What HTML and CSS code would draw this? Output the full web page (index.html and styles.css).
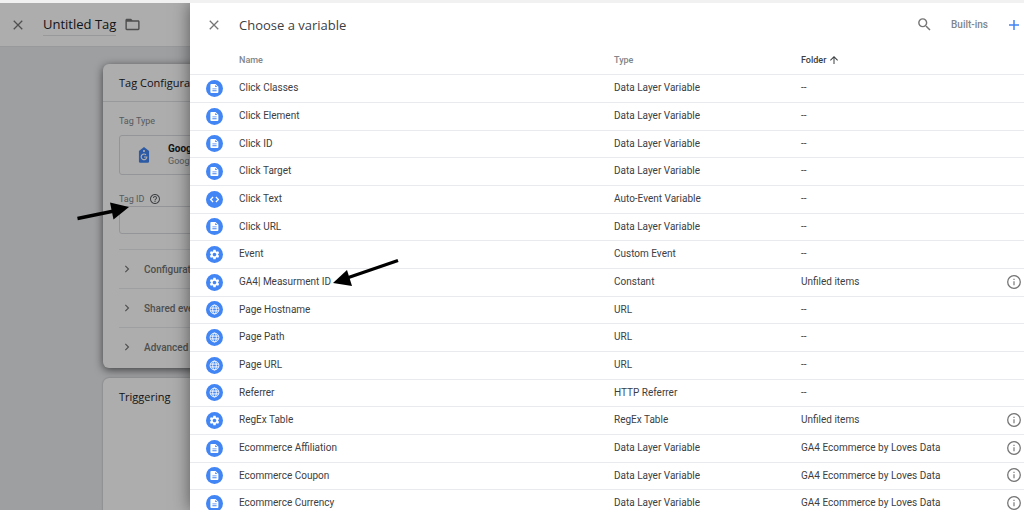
FILE: index.html
```html
<!DOCTYPE html>
<html lang="en">
<head>
    <meta charset="UTF-8">
    <meta name="viewport" content="width=device-width, initial-scale=1.0">
    <title>Choose a variable</title>
    <link rel="stylesheet" href="styles.css">
</head>
<body>
    <!-- Icon sprite -->
    <svg class="sprite" aria-hidden="true">
        <symbol id="icon-close" viewBox="0 0 24 24"><path d="M3.500 3.500L20.500 20.500M20.500 3.500L3.500 20.500" fill="none" stroke="currentColor" stroke-width="2.600"/></symbol>
        <symbol id="icon-folder" viewBox="0 0 24 24"><path d="M20 6h-8l-2-2H4c-1.1 0-2 .9-2 2v12c0 1.1.9 2 2 2h16c1.1 0 2-.9 2-2V8c0-1.1-.9-2-2-2zm0 12H4V8h16v10z"/></symbol>
        <symbol id="icon-help" viewBox="0 0 24 24"><path d="M11 18h2v-2h-2v2zm1-16C6.48 2 2 6.48 2 12s4.48 10 10 10 10-4.480 10-10S17.520 2 12 2zm0 18c-4.410 0-8-3.590-8-8s3.590-8 8-8 8 3.590 8 8-3.590 8-8 8zm0-14c-2.210 0-4 1.790-4 4h2c0-1.100.9-2 2-2s2 .9 2 2c0 2-3 1.750-3 5h2c0-2.250 3-2.500 3-5 0-2.210-1.790-4-4-4z"/></symbol>
        <symbol id="icon-chevron" viewBox="0 0 24 24"><path d="M8 4.500L15.500 12L8 19.500" fill="none" stroke="currentColor" stroke-width="2.800"/></symbol>
        <symbol id="icon-search" viewBox="0 0 24 24"><path d="M15.500 14h-.79l-.28-.27A6.471 6.471 0 0 0 16 9.500 6.500 6.500 0 1 0 9.500 16c1.610 0 3.090-.59 4.230-1.570l.27.28v.79l5 4.990L20.490 19l-4.990-5zm-6 0C7.010 14 5 11.990 5 9.500S7.010 5 9.500 5 14 7.010 14 9.500 11.990 14 9.500 14z"/></symbol>
        <symbol id="icon-plus" viewBox="0 0 24 24"><path d="M12 2V22M2 12H22" fill="none" stroke="currentColor" stroke-width="3"/></symbol>
        <symbol id="icon-up" viewBox="0 0 24 24"><path d="M4 12l1.410 1.410L11 7.830V20h2V7.830l5.580 5.590L20 12l-8-8-8 8z"/></symbol>
        <symbol id="icon-info" viewBox="0 0 24 24"><circle cx="12" cy="12" r="10.800" fill="none" stroke="currentColor" stroke-width="2.200"/><path d="M11 10.500h2v7h-2zM11 6.500h2v2.200h-2z"/></symbol>
        <symbol id="icon-doc" viewBox="0 0 24 24"><circle cx="12" cy="12" r="12" fill="#4285f4"/><path fill="#fff" fill-rule="evenodd" d="M7.500 5.500h6L17.500 9.500V17a1.300 1.300 0 0 1-1.300 1.300H7.500A1.300 1.300 0 0 1 6.200 17V6.800A1.300 1.300 0 0 1 7.500 5.500zm5.500 1.500V10h3zM9 12v1.200h6V12zm0 2.500v1.300h6v-1.300z"/></symbol>
        <symbol id="icon-code" viewBox="0 0 24 24"><circle cx="12" cy="12" r="12" fill="#4285f4"/><path d="M10 8.500L6.500 12L10 15.500M14 8.500L17.500 12L14 15.500" fill="none" stroke="#fff" stroke-width="1.700"/></symbol>
        <symbol id="icon-gear" viewBox="0 0 24 24"><circle cx="12" cy="12" r="12" fill="#4285f4"/><g transform="translate(3.500 3.500) scale(.708)"><path fill="#fff" d="M19.140 12.940c.04-.3.06-.61.06-.94 0-.32-.02-.64-.07-.94l2.030-1.580c.18-.14.23-.41.12-.61l-1.920-3.320c-.12-.22-.37-.29-.59-.22l-2.390.96c-.5-.38-1.030-.7-1.620-.94l-.36-2.540c-.04-.24-.24-.41-.48-.41h-3.840c-.24 0-.43.17-.47.41l-.36 2.540c-.59.24-1.130.57-1.620.94l-2.390-.96c-.22-.08-.47 0-.59.22L2.740 8.870c-.12.21-.08.47.12.61l2.030 1.580c-.05.3-.09.63-.09.94s.02.64.07.94l-2.030 1.580c-.18.14-.23.41-.12.61l1.920 3.320c.12.22.37.29.59.22l2.390-.96c.5.38 1.030.7 1.620.94l.36 2.540c.05.24.24.41.48.41h3.840c.24 0 .44-.17.47-.41l.36-2.540c.59-.24 1.130-.56 1.620-.94l2.390.96c.22.08.47 0 .59-.22l1.920-3.320c.12-.22.07-.47-.12-.61l-2.010-1.580zM12 15.600c-1.980 0-3.600-1.620-3.600-3.600s1.620-3.600 3.600-3.600 3.600 1.620 3.600 3.600-1.620 3.600-3.600 3.600z"/></g></symbol>
        <symbol id="icon-globe" viewBox="0 0 24 24"><circle cx="12" cy="12" r="12" fill="#4285f4"/><g fill="none" stroke="#fff" stroke-width="1.300"><circle cx="12" cy="12" r="6.200"/><ellipse cx="12" cy="12" rx="2.600" ry="6.200"/><path d="M6.500 10h11M6.500 14h11"/></g></symbol>
        <symbol id="icon-tag" viewBox="0 0 22 30"><path fill="#4285f4" d="M11 0l9.500 7.500V27a2.500 2.500 0 0 1-2.500 2.500H4A2.500 2.500 0 0 1 1.500 27V7.500z"/><circle cx="11" cy="7.500" r="2" fill="#fff"/><path d="M14.800 14.800A5.300 5.300 0 1 0 16.300 18.700H11" fill="none" stroke="#fff" stroke-width="2.200"/></symbol>
    </svg>

    <div class="top-strip"></div>
    <div class="workspace">
        <div class="editor">
            <header class="editor-header">
                <button class="icon-button" aria-label="Close tag"><svg class="icon-md"><use href="#icon-close"/></svg></button>
                <h1 class="editor-title">Untitled Tag</h1>
                <button class="icon-button" aria-label="Folder"><svg class="icon-lg"><use href="#icon-folder"/></svg></button>
            </header>
            <main class="editor-body">
                <section class="card card-raised">
                    <h2 class="card-title card-title-ruled">Tag Configuration</h2>
                    <div class="card-content">
                        <p class="field-label">Tag Type</p>
                        <button class="tag-type">
                            <svg class="tag-icon"><use href="#icon-tag"/></svg>
                            <span><span class="tag-name">Google Tag</span><span class="tag-vendor">Google</span></span>
                        </button>
                        <div class="field-row">
                            <label class="field-label" for="tag-id">Tag ID</label>
                            <svg class="icon-md"><use href="#icon-help"/></svg>
                        </div>
                        <input class="tag-id" id="tag-id" type="text">
                        <button class="section-toggle"><svg class="icon-sm"><use href="#icon-chevron"/></svg>Configuration settings</button>
                        <button class="section-toggle"><svg class="icon-sm"><use href="#icon-chevron"/></svg>Shared event settings</button>
                        <button class="section-toggle"><svg class="icon-sm"><use href="#icon-chevron"/></svg>Advanced Settings</button>
                    </div>
                </section>
                <section class="card card-triggering">
                    <h2 class="card-title">Triggering</h2>
                </section>
            </main>
        </div>
        <div class="scrim"></div>

        <aside class="sheet">
            <header class="sheet-header">
                <button class="icon-button" aria-label="Close"><svg class="icon-md"><use href="#icon-close"/></svg></button>
                <h2 class="sheet-title">Choose a variable</h2>
                <button class="icon-button" aria-label="Search"><svg class="icon-lg"><use href="#icon-search"/></svg></button>
                <button class="built-ins">Built-ins</button>
                <button class="icon-button add-button" aria-label="New variable"><svg class="icon-md"><use href="#icon-plus"/></svg></button>
            </header>
            <table class="variables">
                <colgroup>
                    <col class="col-icon">
                    <col>
                    <col class="col-type">
                    <col class="col-folder">
                    <col class="col-info">
                </colgroup>
                <thead>
                    <tr><th></th><th>Name</th><th>Type</th><th class="sorted"><span class="sort-label">Folder<svg class="icon-md"><use href="#icon-up"/></svg></span></th><th></th></tr>
                </thead>
                <tbody>
                    <tr><td><svg class="type-icon"><use href="#icon-doc"/></svg></td><td>Click Classes</td><td>Data Layer Variable</td><td>--</td><td></td></tr>
                    <tr><td><svg class="type-icon"><use href="#icon-doc"/></svg></td><td>Click Element</td><td>Data Layer Variable</td><td>--</td><td></td></tr>
                    <tr><td><svg class="type-icon"><use href="#icon-doc"/></svg></td><td>Click ID</td><td>Data Layer Variable</td><td>--</td><td></td></tr>
                    <tr><td><svg class="type-icon"><use href="#icon-doc"/></svg></td><td>Click Target</td><td>Data Layer Variable</td><td>--</td><td></td></tr>
                    <tr><td><svg class="type-icon"><use href="#icon-code"/></svg></td><td>Click Text</td><td>Auto-Event Variable</td><td>--</td><td></td></tr>
                    <tr><td><svg class="type-icon"><use href="#icon-doc"/></svg></td><td>Click URL</td><td>Data Layer Variable</td><td>--</td><td></td></tr>
                    <tr><td><svg class="type-icon"><use href="#icon-gear"/></svg></td><td>Event</td><td>Custom Event</td><td>--</td><td></td></tr>
                    <tr><td><svg class="type-icon"><use href="#icon-gear"/></svg></td><td>GA4| Measurment ID</td><td>Constant</td><td>Unfiled items</td><td><button class="icon-button info-button" aria-label="Details"><svg class="info-icon"><use href="#icon-info"/></svg></button></td></tr>
                    <tr><td><svg class="type-icon"><use href="#icon-globe"/></svg></td><td>Page Hostname</td><td>URL</td><td>--</td><td></td></tr>
                    <tr><td><svg class="type-icon"><use href="#icon-globe"/></svg></td><td>Page Path</td><td>URL</td><td>--</td><td></td></tr>
                    <tr><td><svg class="type-icon"><use href="#icon-globe"/></svg></td><td>Page URL</td><td>URL</td><td>--</td><td></td></tr>
                    <tr><td><svg class="type-icon"><use href="#icon-globe"/></svg></td><td>Referrer</td><td>HTTP Referrer</td><td>--</td><td></td></tr>
                    <tr><td><svg class="type-icon"><use href="#icon-gear"/></svg></td><td>RegEx Table</td><td>RegEx Table</td><td>Unfiled items</td><td><button class="icon-button info-button" aria-label="Details"><svg class="info-icon"><use href="#icon-info"/></svg></button></td></tr>
                    <tr><td><svg class="type-icon"><use href="#icon-doc"/></svg></td><td>Ecommerce Affiliation</td><td>Data Layer Variable</td><td>GA4 Ecommerce by Loves Data</td><td><button class="icon-button info-button" aria-label="Details"><svg class="info-icon"><use href="#icon-info"/></svg></button></td></tr>
                    <tr><td><svg class="type-icon"><use href="#icon-doc"/></svg></td><td>Ecommerce Coupon</td><td>Data Layer Variable</td><td>GA4 Ecommerce by Loves Data</td><td><button class="icon-button info-button" aria-label="Details"><svg class="info-icon"><use href="#icon-info"/></svg></button></td></tr>
                    <tr><td><svg class="type-icon"><use href="#icon-doc"/></svg></td><td>Ecommerce Currency</td><td>Data Layer Variable</td><td>GA4 Ecommerce by Loves Data</td><td><button class="icon-button info-button" aria-label="Details"><svg class="info-icon"><use href="#icon-info"/></svg></button></td></tr>
                </tbody>
            </table>
        </aside>
    </div>

    <!-- Annotation arrows -->
    <svg class="arrow arrow-tag-id" viewBox="0 0 54 20"><path d="M1.500 16.500L38 9" stroke="#000" stroke-width="3.400"/><path d="M34 .5L53 5L37.500 17.500z"/></svg>
    <svg class="arrow arrow-measurement" viewBox="0 0 68 30"><path d="M65 2.500L14 20" stroke="#000" stroke-width="3.400"/><path d="M14 12L0 25L19 28z"/></svg>
</body>
</html>
```

FILE: styles.css
```css
* {
    margin: 0;
    padding: 0;
    box-sizing: border-box;
}

body {
    font-family: Roboto, "Liberation Sans", sans-serif;
    font-size: 10px;
    color: #3c4043;
    height: 100vh;
    display: flex;
    flex-direction: column;
    overflow: hidden;
    position: relative;
}

button {
    font: inherit;
    color: inherit;
    background: none;
    border: none;
    cursor: pointer;
}

svg {
    display: block;
    fill: currentColor;
}

.sprite {
    position: absolute;
    width: 0;
    height: 0;
}

.top-strip {
    height: 3px;
    flex: none;
    background: #f1f1f1;
}

.workspace {
    flex: 1;
    position: relative;
    overflow: hidden;
}

.icon-button {
    display: flex;
    color: #757575;
}

.icon-sm {
    width: 10px;
    height: 10px;
}

.icon-md {
    width: 12px;
    height: 12px;
}

.icon-lg {
    width: 17px;
    height: 17px;
}

/* Tag editor */
.editor {
    height: 100%;
    background: #e8eaed;
}

.editor-header {
    display: flex;
    align-items: center;
    height: 44px;
    padding-left: 12px;
    background: #fff;
    border-bottom: 1px solid #e0e2e4;
}

.editor-title {
    margin: 0 8px 0 19px;
    font-family: "Open Sans", sans-serif;
    font-size: 13px;
    font-weight: 400;
    line-height: 22px;
    color: #202124;
    border-bottom: 1px solid #e0e2e4;
}

.editor-body {
    display: flex;
    flex-direction: column;
    gap: 10px;
    padding: 17px 0 0 103px;
}

.card {
    background: #fff;
    border-radius: 6px;
    box-shadow: 0 0 2px rgba(0, 0, 0, 0.3);
}

.card-raised {
    box-shadow: 0 2px 8px rgba(0, 0, 0, 0.6);
}

.card-triggering {
    height: 300px;
}

.card-title {
    padding: 0 16px;
    font-family: "Open Sans", sans-serif;
    font-size: 11px;
    font-weight: 400;
    line-height: 37px;
    color: #202124;
}

.card-title-ruled {
    border-bottom: 1px solid #e0e2e4;
}

.card-content {
    padding: 12px 16px 2px;
}

.field-label {
    font-size: 9px;
    line-height: 14px;
    color: #80868b;
}

.tag-type {
    display: flex;
    align-items: center;
    gap: 18px;
    width: 100%;
    height: 40px;
    margin: 7px 0 17px;
    padding-left: 18px;
    border: 1px solid #dadce0;
    border-radius: 3px;
    text-align: left;
}

.tag-icon {
    width: 12px;
    height: 16px;
}

.tag-name,
.tag-vendor {
    display: block;
    line-height: 12px;
}

.tag-name {
    font-weight: 700;
    color: #202124;
}

.tag-vendor {
    font-size: 9px;
    color: #80868b;
}

.field-row {
    display: flex;
    align-items: center;
    gap: 5px;
    color: #5f6368;
}

.tag-id {
    display: block;
    width: 100%;
    height: 28px;
    margin-bottom: 15px;
    border: 1px solid #dadce0;
    border-radius: 3px;
    background: #fff;
}

.section-toggle {
    display: flex;
    align-items: center;
    gap: 12px;
    width: 100%;
    height: 39px;
    padding-left: 3px;
    border-top: 1px solid #e8eaed;
    font-weight: 500;
    color: #757575;
}

.scrim {
    position: absolute;
    inset: 0;
    background: rgba(0, 0, 0, 0.32);
}

/* Variable picker sheet */
.sheet {
    position: absolute;
    inset: 0 0 0 190px;
    background: #fff;
    box-shadow: 0 0 16px rgba(0, 0, 0, 0.5);
}

.sheet-header {
    display: flex;
    align-items: center;
    height: 43px;
    padding: 0 4px 0 18px;
}

.sheet-title {
    flex: 1;
    margin-left: 19px;
    font-family: "Open Sans", sans-serif;
    font-size: 13px;
    font-weight: 400;
    color: #3c4043;
}

.built-ins {
    margin: 0 20px 0 18px;
    font-weight: 500;
    color: #80868b;
}

.add-button {
    color: #4285f4;
}

.variables {
    width: 100%;
    table-layout: fixed;
    border-collapse: collapse;
}

.col-icon {
    width: 49px;
}

.col-type {
    width: 187px;
}

.col-folder {
    width: 200px;
}

.col-info {
    width: 23px;
}

.variables tr {
    height: 28px;
    border-bottom: 1px solid #e8eaed;
}

.variables tbody tr:nth-child(3n) {
    height: 27px;
}

.variables th {
    font-size: 9px;
    font-weight: 500;
    text-align: left;
    color: #80868b;
}

.variables .sorted {
    color: #3c4043;
}

.sort-label {
    display: flex;
    align-items: center;
    gap: 2px;
}

.variables td {
    padding-bottom: 1px;
}

.variables td:first-child {
    padding: 0 0 0 16px;
}

.type-icon {
    width: 17px;
    height: 17px;
}

.info-button {
    margin-left: 6px;
}

.info-icon {
    width: 14px;
    height: 14px;
}

.arrow {
    position: absolute;
    fill: #000;
}

.arrow-tag-id {
    left: 76px;
    top: 202px;
    width: 54px;
    height: 20px;
}

.arrow-measurement {
    left: 333px;
    top: 258px;
    width: 68px;
    height: 30px;
}
```
